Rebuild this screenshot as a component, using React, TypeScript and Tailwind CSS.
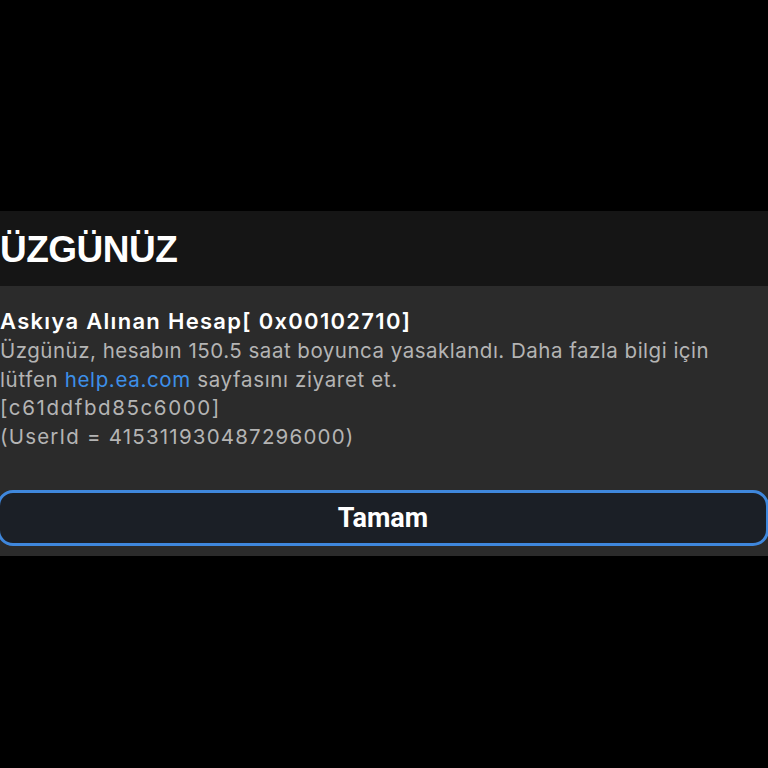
export default function App() {
  return (
    <div className="w-[768px] h-[768px] bg-black overflow-hidden flex flex-col">
      <div className="h-[211px] shrink-0" />
      <div className="h-[75px] shrink-0 bg-[#151515] flex items-center">
        <h1
          className="text-[37px] font-bold text-white leading-none tracking-[-0.5px] pt-[2px]"
          style={{ fontFamily: '"Liberation Sans", Arial, sans-serif' }}
        >
          ÜZGÜNÜZ
        </h1>
      </div>
      <div className="h-[270px] shrink-0 bg-[#2b2b2b] flex flex-col pt-[20px]">
        <div style={{ fontFamily: 'Inter, "Noto Sans", sans-serif' }}>
          <p className="text-[22px] font-semibold text-white leading-[30px] tracking-[1.3px]">
            Askıya Alınan Hesap[ 0x00102710]
          </p>
          <div className="pt-[1px] text-[20.5px] text-[#b4b4b4] leading-[28.5px] tracking-[0.5px]">
            <p>Üzgünüz, hesabın 150.5 saat boyunca yasaklandı. Daha fazla bilgi için</p>
            <p className="tracking-[0.65px]">
              lütfen <span className="text-[#3d8fe8]">help.ea.com</span> sayfasını ziyaret et.
            </p>
            <p className="tracking-[1.6px]">[c61ddfbd85c6000]</p>
            <p className="tracking-[1.2px]">(UserId = 415311930487296000)</p>
          </div>
        </div>
        <button
          className="mt-[39px] -ml-[3px] w-[772px] h-[56px] rounded-[16px] border-[3px] border-[#3f87dc] bg-[#1b1f26] text-white text-[27px] font-bold flex items-center justify-center"
          style={{ fontFamily: 'Roboto, "Liberation Sans", sans-serif' }}
        >
          Tamam
        </button>
      </div>
    </div>
  );
}
